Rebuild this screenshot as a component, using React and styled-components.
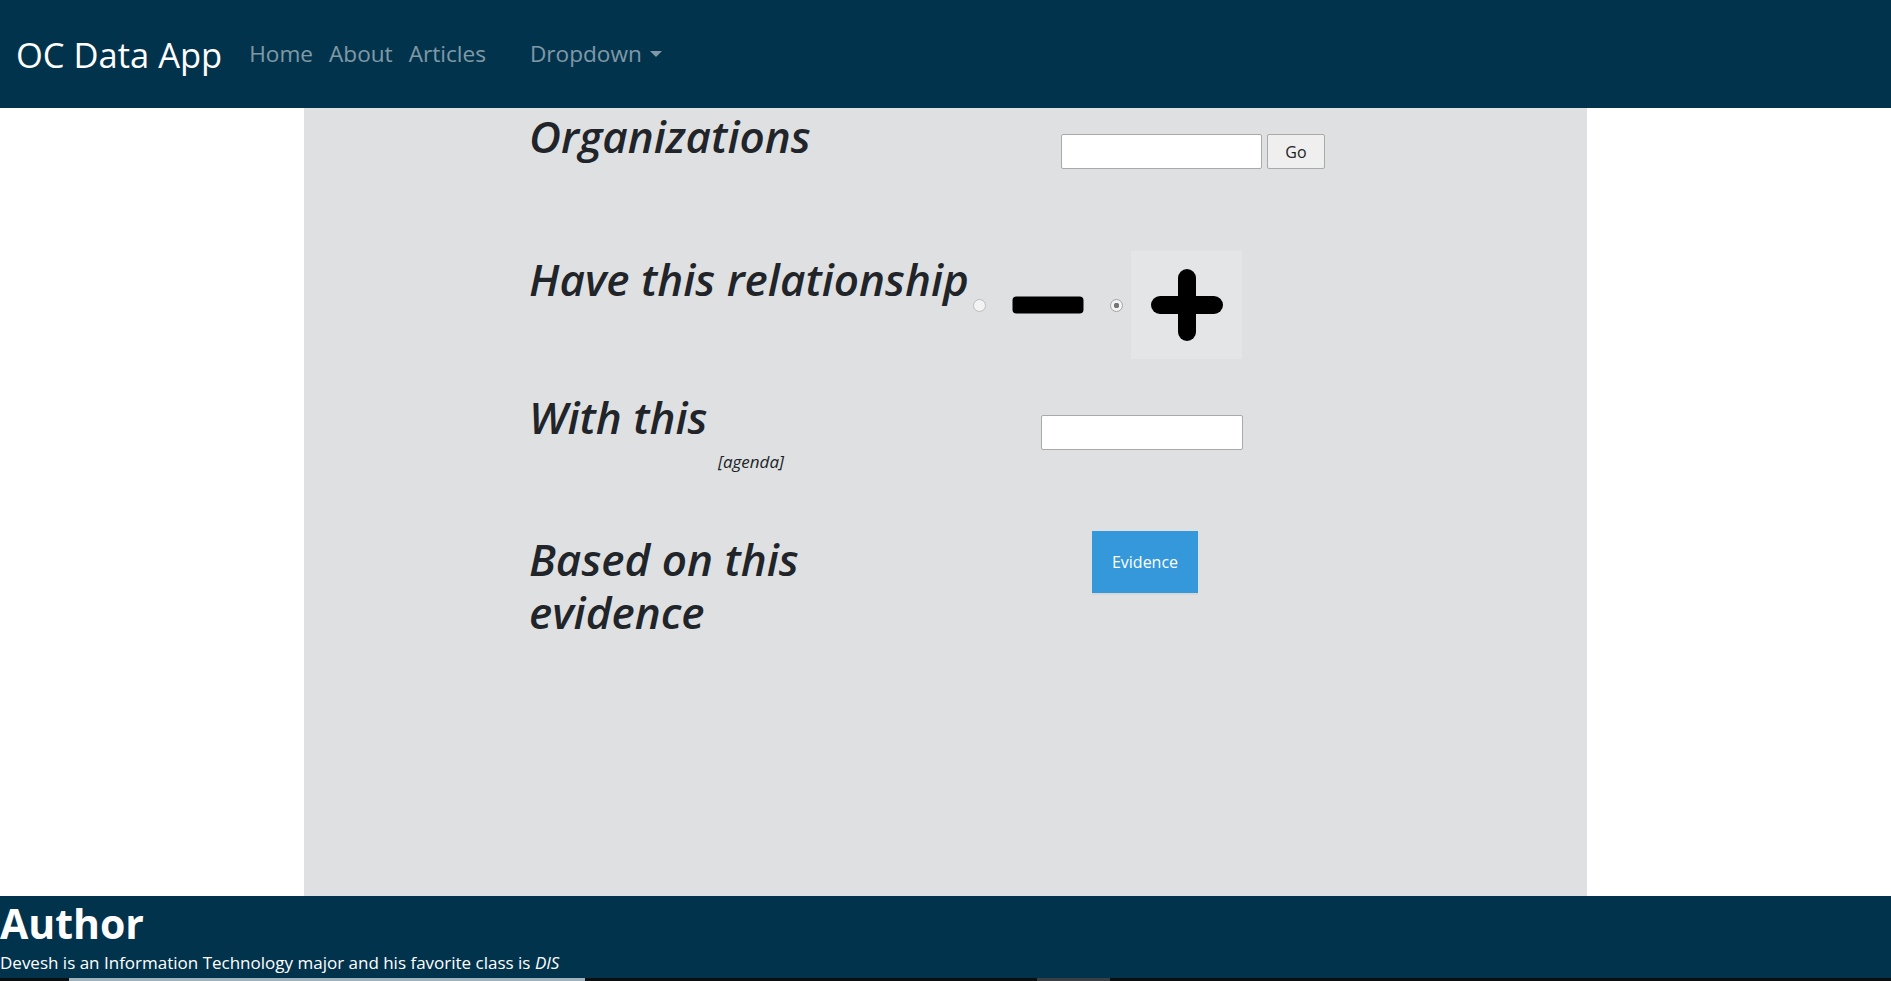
import React from "react";
import styled, { createGlobalStyle } from "styled-components";

const navy = "#02334d";
const fontStack = `"Segoe UI", "Open Sans", "Noto Sans", sans-serif`;

const GlobalStyle = createGlobalStyle`
  html, body {
    margin: 0;
    padding: 0;
    background: #ffffff;
    font-family: ${fontStack};
    color: #212529;
  }
  * { box-sizing: border-box; }
`;

const Page = styled.div`
  display: flex;
  flex-direction: column;
  width: 100%;
  height: 981px;
  overflow: hidden;
`;

const Navbar = styled.nav`
  display: flex;
  align-items: center;
  height: 108px;
  padding: 0 0 0 16px;
  background: ${navy};
`;

const Brand = styled.a`
  font-size: 34.5px;
  line-height: 1;
  color: #ffffff;
  text-decoration: none;
  margin-right: 19px;
  padding-top: 2px;
`;

const NavLink = styled.a`
  font-size: 22.6px;
  line-height: 1;
  color: rgba(255, 255, 255, 0.5);
  text-decoration: none;
  padding: 0 8px;
  margin-left: ${(p) => p.$gap || 0}px;
  display: flex;
  align-items: center;
`;

const Caret = styled.span`
  display: inline-block;
  margin-left: 8px;
  width: 0;
  height: 0;
  border-left: 6px solid transparent;
  border-right: 6px solid transparent;
  border-top: 6px solid rgba(255, 255, 255, 0.5);
`;

const Main = styled.main`
  width: 1283px;
  height: 788px;
  margin: 0 auto;
  background: #dfe0e2;
  padding: 2px 0 0 225px;
`;

const Row = styled.section`
  display: flex;
  align-items: flex-start;
  min-height: ${(p) => p.$h}px;
`;

const Label = styled.div`
  width: 444px;
  flex: 0 0 444px;
`;

const Heading = styled.h1`
  margin: 0;
  font-size: 44px;
  line-height: 53px;
  font-style: italic;
  font-weight: 600;
  white-space: nowrap;
  color: #212529;
`;

const Hint = styled.p`
  margin: 8px 0 0 0;
  text-align: center;
  font-size: 17px;
  line-height: 1.2;
  font-style: italic;
  color: #212529;
`;

const Controls = styled.div`
  display: flex;
  align-items: center;
  margin-left: ${(p) => p.$left}px;
  margin-top: ${(p) => p.$top}px;
`;

const TextInput = styled.input`
  width: ${(p) => p.$w}px;
  height: 35px;
  border: 1px solid #a9a9a9;
  border-radius: 2px;
  background: #ffffff;
  padding: 2px 6px;
  font-family: ${fontStack};
`;

const GoButton = styled.button`
  width: 58px;
  height: 35px;
  margin-left: 5px;
  border: 1px solid #a9a9a9;
  border-radius: 2px;
  background: #efefef;
  font-family: ${fontStack};
  font-size: 16px;
  color: #222;
`;

const Radio = styled.input.attrs({ type: "radio", name: "relation" })`
  appearance: none;
  margin: 0 0 0 ${(p) => p.$gap || 0}px;
  width: 13px;
  height: 13px;
  border-radius: 50%;
  border: 1px solid #bdbdbd;
  background: #f3f3f3;
  flex: 0 0 auto;
  &:checked {
    background: radial-gradient(circle, #767676 0 2.5px, #f3f3f3 3px);
    border-color: #a6a6a6;
  }
`;

const IconButton = styled.button`
  display: flex;
  align-items: center;
  justify-content: center;
  border: none;
  padding: 0;
  margin-left: ${(p) => p.$gap}px;
  width: ${(p) => p.$w}px;
  height: 108px;
  background: ${(p) => (p.$focused ? "#e4e5e7" : "transparent")};
`;

const EvidenceButton = styled.button`
  width: 106px;
  height: 62px;
  border: none;
  background: #3498db;
  color: #ffffff;
  font-family: ${fontStack};
  font-size: 16px;
  box-shadow: 0 2px 0 rgba(0, 0, 0, 0.04);
`;

const Footer = styled.footer`
  background: ${navy};
  color: #ffffff;
  padding: 3px 0 4px 0;
`;

const FooterTitle = styled.h2`
  margin: 0;
  font-size: 41px;
  line-height: 48px;
  font-weight: 700;
`;

const FooterText = styled.p`
  margin: 5px 0 0 0;
  font-size: 17px;
  line-height: 22px;
`;

const BottomStrip = styled.div`
  display: flex;
  height: 3px;
  background: #0b0f12;
`;

const StripSegment = styled.span`
  margin-left: ${(p) => p.$left}px;
  width: ${(p) => p.$w}px;
  background: ${(p) => p.$color};
`;

const MinusIcon = () => (
  <svg width="72" height="18" viewBox="0 0 72 18">
    <rect x="0.5" y="0.5" width="71" height="17" rx="4" fill="#000" />
  </svg>
);

const PlusIcon = () => (
  <svg width="72" height="72" viewBox="0 0 72 72">
    <rect x="0" y="27" width="72" height="18" rx="9" fill="#000" />
    <rect x="27" y="0" width="18" height="72" rx="9" fill="#000" />
  </svg>
);

export default function App() {
  return (
    <>
      <GlobalStyle />
      <Page>
        <Navbar>
          <Brand href="#">OC Data App</Brand>
          <NavLink href="#">Home</NavLink>
          <NavLink href="#">About</NavLink>
          <NavLink href="#">Articles</NavLink>
          <NavLink href="#" $gap={28}>
            Dropdown
            <Caret />
          </NavLink>
        </Navbar>

        <Main>
          <Row $h={143}>
            <Label>
              <Heading>Organizations</Heading>
            </Label>
            <Controls $left={88} $top={24}>
              <TextInput $w={201} />
              <GoButton>Go</GoButton>
            </Controls>
          </Row>

          <Row $h={138}>
            <Label>
              <Heading>Have this relationship</Heading>
            </Label>
            <Controls $left={0} $top={-2}>
              <Radio />
              <IconButton $gap={26} $w={72}>
                <MinusIcon />
              </IconButton>
              <Radio defaultChecked $gap={26} />
              <IconButton $gap={8} $w={111} $focused>
                <PlusIcon />
              </IconButton>
            </Controls>
          </Row>

          <Row $h={142}>
            <Label>
              <Heading>With this</Heading>
              <Hint>[agenda]</Hint>
            </Label>
            <Controls $left={68} $top={24}>
              <TextInput $w={202} />
            </Controls>
          </Row>

          <Row $h={142}>
            <Label>
              <Heading>
                Based on this
                <br />
                evidence
              </Heading>
            </Label>
            <Controls $left={119} $top={-2}>
              <EvidenceButton>Evidence</EvidenceButton>
            </Controls>
          </Row>
        </Main>

        <Footer>
          <FooterTitle>Author</FooterTitle>
          <FooterText>
            Devesh is an Information Technology major and his favorite class is <em>DIS</em>
          </FooterText>
        </Footer>
        <BottomStrip>
          <StripSegment $left={69} $w={516} $color="#9fb3bf" />
          <StripSegment $left={452} $w={73} $color="#3a3f44" />
        </BottomStrip>
      </Page>
    </>
  );
}
